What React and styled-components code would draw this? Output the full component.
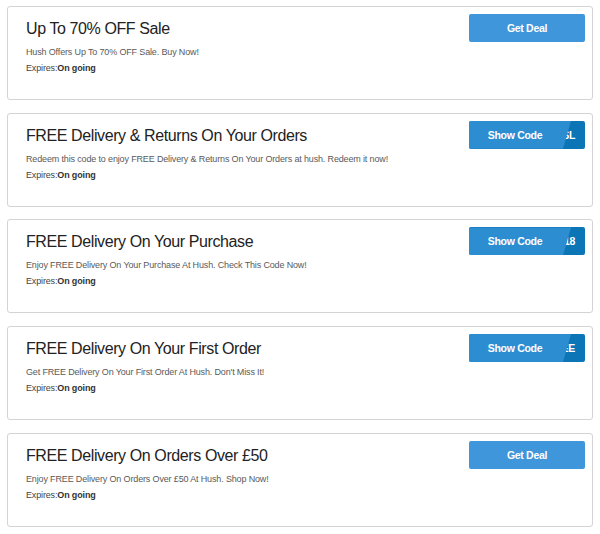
import React from 'react';
import styled, { createGlobalStyle } from 'styled-components';

const GlobalStyle = createGlobalStyle`
  body {
    margin: 0;
    padding: 6px 7px;
    background: #fff;
    font-family: "Liberation Sans", Arial, sans-serif;
  }
`;

const List = styled.ul`
  list-style: none;
  margin: 0;
  padding: 0;
`;

const Card = styled.li`
  box-sizing: border-box;
  height: 94px;
  margin-bottom: 12.7px;
  padding: 7px 7px 0 18px;
  display: flex;
  justify-content: space-between;
  align-items: flex-start;
  background: #fff;
  border: 1px solid #d4d4d4;
  border-radius: 3px;
`;

const Info = styled.div`
  padding-top: 5px;
`;

const Title = styled.h3`
  margin: 0 0 5px;
  font-size: 16px;
  line-height: 20px;
  font-weight: normal;
  letter-spacing: -0.4px;
  color: #222;
`;

const Text = styled.p`
  margin: 0;
  font-size: 9px;
  line-height: 16px;
  letter-spacing: -0.15px;
  color: ${({ $dark }) => ($dark ? '#444' : '#5a5a5a')};
`;

const Strong = styled.b`
  color: #333;
`;

const buttonBase = `
  box-sizing: border-box;
  flex: none;
  width: 116px;
  height: 28px;
  border-radius: 2px;
  color: #fff;
  font-size: 10.5px;
  font-weight: bold;
  letter-spacing: -0.3px;
  line-height: 28px;
`;

const DealButton = styled.div`
  ${buttonBase}
  background: #3f96da;
  text-align: center;
`;

const CodeButton = styled.div`
  ${buttonBase}
  position: relative;
  overflow: hidden;
  background: #0c75b6;
  text-align: right;
  padding-right: 10px;
`;

const CodeCover = styled.div`
  position: absolute;
  top: 0;
  left: 0;
  box-sizing: border-box;
  width: 102px;
  height: 100%;
  padding-right: 10px;
  background: #2c8ed1;
  text-align: center;
  clip-path: polygon(0 0, 102px 0, 94px 100%, 0 100%);
`;

const offers = [
  {
    title: 'Up To 70% OFF Sale',
    text: 'Hush Offers Up To 70% OFF Sale. Buy Now!',
  },
  {
    title: 'FREE Delivery & Returns On Your Orders',
    text: 'Redeem this code to enjoy FREE Delivery & Returns On Your Orders at hush. Redeem it now!',
    code: 'HUSHSL',
  },
  {
    title: 'FREE Delivery On Your Purchase',
    text: 'Enjoy FREE Delivery On Your Purchase At Hush. Check This Code Now!',
    code: 'HUSH18',
  },
  {
    title: 'FREE Delivery On Your First Order',
    text: "Get FREE Delivery On Your First Order At Hush. Don't Miss It!",
    code: 'HUSHFREE',
  },
  {
    title: 'FREE Delivery On Orders Over £50',
    text: 'Enjoy FREE Delivery On Orders Over £50 At Hush. Shop Now!',
  },
];

export default function App() {
  return (
    <>
      <GlobalStyle />
      <List>
        {offers.map(({ title, text, code }) => (
          <Card key={title}>
            <Info>
              <Title>{title}</Title>
              <Text>{text}</Text>
              <Text $dark>
                Expires:<Strong>On going</Strong>
              </Text>
            </Info>
            {code ? (
              <CodeButton>
                {code}
                <CodeCover>Show Code</CodeCover>
              </CodeButton>
            ) : (
              <DealButton>Get Deal</DealButton>
            )}
          </Card>
        ))}
      </List>
    </>
  );
}
